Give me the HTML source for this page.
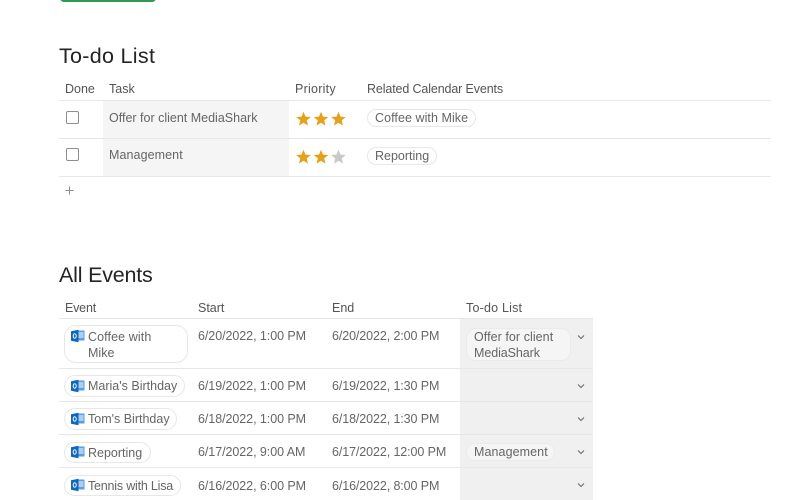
<!DOCTYPE html>
<html><head><meta charset="utf-8">
<style>
html,body{margin:0;padding:0;background:#fff}
body{width:800px;height:500px;position:relative;overflow:hidden;font-family:"Liberation Sans",sans-serif;font-size:12.5px;color:#666564}
.t{position:absolute;white-space:nowrap;line-height:16px}
.h{color:#555453}
.title{position:absolute;font-size:21.5px;color:#252423;line-height:28px;white-space:nowrap}
.l{position:absolute;height:1px;background:#e8e7e7}
.b{position:absolute;background:#f5f5f5}
.g{position:absolute;background:#f0f0f0}
.p{position:absolute;box-sizing:border-box;border:1px solid #e8e7e6;border-radius:10px;background:#fff}
.q{position:absolute;box-sizing:border-box;border:1px solid #ebeaea;border-radius:10px;background:#f5f5f5}
.cb{position:absolute;box-sizing:border-box;width:13px;height:13px;border:1.5px solid #8f8d8b;border-radius:2px;background:#fff}
svg{position:absolute;display:block}
</style></head>
<body>
<div style="position:absolute;left:60px;top:-8px;width:96px;height:10px;background:#2f9a4f;border-radius:4px"></div>

<div class="title" style="left:59px;top:42px;letter-spacing:.3px">To-do List</div>

<div class="t h" style="left:65px;top:81px">Done</div>
<div class="t h" style="left:109px;top:81px">Task</div>
<div class="t h" style="left:295px;top:81px;letter-spacing:.25px">Priority</div>
<div class="t h" style="left:367px;top:81px;letter-spacing:-.13px">Related Calendar Events</div>

<div class="b" style="left:103px;top:101px;width:186px;height:75px"></div>
<div class="l" style="left:59px;top:100px;width:712px"></div>
<div class="l" style="left:59px;top:138px;width:712px"></div>
<div class="l" style="left:59px;top:176px;width:712px"></div>

<div class="cb" style="left:66px;top:111px"></div>
<div class="cb" style="left:66px;top:148px"></div>
<div class="t" style="left:109px;top:110px">Offer for client MediaShark</div>
<div class="t" style="left:109px;top:147px;letter-spacing:.08px">Management</div>

<svg style="left:295px;top:111px" width="54" height="16" viewBox="0 0 54 16"><g fill="#e5a11c"><path d="M8.500 .8L10.500 5.600 15.800 6 11.700 9.400 13 14.600 8.500 11.800 4 14.600 5.300 9.400 1.200 6 6.500 5.600Z"/><path transform="translate(17.500 0)" d="M8.500 .8L10.500 5.600 15.800 6 11.700 9.400 13 14.600 8.500 11.800 4 14.600 5.300 9.400 1.200 6 6.500 5.600Z"/><path transform="translate(35 0)" d="M8.500 .8L10.500 5.600 15.800 6 11.700 9.400 13 14.600 8.500 11.800 4 14.600 5.300 9.400 1.200 6 6.500 5.600Z"/></g></svg>
<svg style="left:295px;top:149px" width="54" height="16" viewBox="0 0 54 16"><g fill="#e5a11c"><path d="M8.500 .8L10.500 5.600 15.800 6 11.700 9.400 13 14.600 8.500 11.800 4 14.600 5.300 9.400 1.200 6 6.500 5.600Z"/><path transform="translate(17.500 0)" d="M8.500 .8L10.500 5.600 15.800 6 11.700 9.400 13 14.600 8.500 11.800 4 14.600 5.300 9.400 1.200 6 6.500 5.600Z"/></g><path fill="#cbc9c8" transform="translate(35 0)" d="M8.500 .8L10.500 5.600 15.800 6 11.700 9.400 13 14.600 8.500 11.800 4 14.600 5.300 9.400 1.200 6 6.500 5.600Z"/></svg>

<div class="p" style="left:367px;top:109px;width:109px;height:18px"></div>
<div class="t" style="left:375px;top:110px;letter-spacing:.06px">Coffee with Mike</div>
<div class="p" style="left:367px;top:147px;width:70px;height:18px"></div>
<div class="t" style="left:375px;top:148px">Reporting</div>

<svg style="left:65px;top:186px" width="9" height="9" viewBox="0 0 9 9"><path d="M4.500 .5V8.500M.5 4.500H8.500" stroke="#8f8d8b" stroke-width="1"/></svg>

<div class="title" style="left:59px;top:261px;letter-spacing:-.2px">All Events</div>

<div class="t h" style="left:65px;top:300px;letter-spacing:-.2px">Event</div>
<div class="t h" style="left:198px;top:300px">Start</div>
<div class="t h" style="left:332px;top:300px">End</div>
<div class="t h" style="left:466px;top:300px;letter-spacing:.2px">To-do List</div>

<div class="g" style="left:460px;top:319px;width:133px;height:181px"></div>
<div class="l" style="left:59px;top:318px;width:534px"></div>
<div class="l" style="left:59px;top:368px;width:534px"></div>
<div class="l" style="left:59px;top:401px;width:534px"></div>
<div class="l" style="left:59px;top:434px;width:534px"></div>
<div class="l" style="left:59px;top:467px;width:534px"></div>

<div class="p" style="left:64px;top:325px;width:124px;height:38px;border-radius:12px"></div>
<div class="p" style="left:64px;top:375px;width:121px;height:22px;border-radius:11px"></div>
<div class="p" style="left:64px;top:408px;width:113px;height:22px;border-radius:11px"></div>
<div class="p" style="left:64px;top:442px;width:87px;height:21px;border-radius:11px"></div>
<div class="p" style="left:64px;top:475px;width:117px;height:21px;border-radius:11px"></div>

<svg style="left:71px;top:329px" width="14" height="14" viewBox="0 0 14 14"><rect x="5" y="1.500" width="8.500" height="10" fill="#5a9fe0"/><path d="M7.500 4H12.500M7.500 6H12.500M7.500 8H12.500" stroke="#fff" stroke-width=".9"/><path d="M0 2.200L7.500 .8V13.200L0 11.800Z" fill="#0f67c0"/><ellipse cx="3.700" cy="7" rx="1.500" ry="2.200" fill="none" stroke="#fff" stroke-width="1"/></svg>
<svg style="left:71px;top:379px" width="14" height="14" viewBox="0 0 14 14"><rect x="5" y="1.500" width="8.500" height="10" fill="#5a9fe0"/><path d="M7.500 4H12.500M7.500 6H12.500M7.500 8H12.500" stroke="#fff" stroke-width=".9"/><path d="M0 2.200L7.500 .8V13.200L0 11.800Z" fill="#0f67c0"/><ellipse cx="3.700" cy="7" rx="1.500" ry="2.200" fill="none" stroke="#fff" stroke-width="1"/></svg>
<svg style="left:71px;top:412px" width="14" height="14" viewBox="0 0 14 14"><rect x="5" y="1.500" width="8.500" height="10" fill="#5a9fe0"/><path d="M7.500 4H12.500M7.500 6H12.500M7.500 8H12.500" stroke="#fff" stroke-width=".9"/><path d="M0 2.200L7.500 .8V13.200L0 11.800Z" fill="#0f67c0"/><ellipse cx="3.700" cy="7" rx="1.500" ry="2.200" fill="none" stroke="#fff" stroke-width="1"/></svg>
<svg style="left:71px;top:445px" width="14" height="14" viewBox="0 0 14 14"><rect x="5" y="1.500" width="8.500" height="10" fill="#5a9fe0"/><path d="M7.500 4H12.500M7.500 6H12.500M7.500 8H12.500" stroke="#fff" stroke-width=".9"/><path d="M0 2.200L7.500 .8V13.200L0 11.800Z" fill="#0f67c0"/><ellipse cx="3.700" cy="7" rx="1.500" ry="2.200" fill="none" stroke="#fff" stroke-width="1"/></svg>
<svg style="left:71px;top:478px" width="14" height="14" viewBox="0 0 14 14"><rect x="5" y="1.500" width="8.500" height="10" fill="#5a9fe0"/><path d="M7.500 4H12.500M7.500 6H12.500M7.500 8H12.500" stroke="#fff" stroke-width=".9"/><path d="M0 2.200L7.500 .8V13.200L0 11.800Z" fill="#0f67c0"/><ellipse cx="3.700" cy="7" rx="1.500" ry="2.200" fill="none" stroke="#fff" stroke-width="1"/></svg>

<div class="t" style="left:88px;top:329px;letter-spacing:.1px">Coffee with</div>
<div class="t" style="left:88px;top:345px">Mike</div>
<div class="t" style="left:88px;top:378px">Maria's Birthday</div>
<div class="t" style="left:88px;top:411px">Tom's Birthday</div>
<div class="t" style="left:88px;top:445px">Reporting</div>
<div class="t" style="left:88px;top:478px;letter-spacing:-.2px">Tennis with Lisa</div>

<div class="t" style="left:198px;top:328px;letter-spacing:-.06px">6/20/2022, 1:00 PM</div>
<div class="t" style="left:198px;top:378px;letter-spacing:-.06px">6/19/2022, 1:00 PM</div>
<div class="t" style="left:198px;top:411px;letter-spacing:-.06px">6/18/2022, 1:00 PM</div>
<div class="t" style="left:198px;top:444px;letter-spacing:-.06px">6/17/2022, 9:00 AM</div>
<div class="t" style="left:198px;top:478px;letter-spacing:-.06px">6/16/2022, 6:00 PM</div>

<div class="t" style="left:332px;top:328px;letter-spacing:-.1px">6/20/2022, 2:00 PM</div>
<div class="t" style="left:332px;top:378px;letter-spacing:-.1px">6/19/2022, 1:30 PM</div>
<div class="t" style="left:332px;top:411px;letter-spacing:-.1px">6/18/2022, 1:30 PM</div>
<div class="t" style="left:332px;top:444px;letter-spacing:-.1px">6/17/2022, 12:00 PM</div>
<div class="t" style="left:332px;top:478px;letter-spacing:-.1px">6/16/2022, 8:00 PM</div>

<div class="q" style="left:466px;top:328px;width:105px;height:33px"></div>
<div class="t" style="left:474px;top:329px;letter-spacing:.06px">Offer for client</div>
<div class="t" style="left:474px;top:345px;letter-spacing:-.08px">MediaShark</div>
<div class="q" style="left:466px;top:443px;width:89px;height:18px"></div>
<div class="t" style="left:474px;top:444px;letter-spacing:.08px">Management</div>

<svg style="left:577px;top:334px" width="8" height="6" viewBox="0 0 8 6"><path d="M1 1.500L4 4.500 7 1.500" fill="none" stroke="#6b6a69" stroke-width="1.100"/></svg>
<svg style="left:577px;top:383px" width="8" height="6" viewBox="0 0 8 6"><path d="M1 1.500L4 4.500 7 1.500" fill="none" stroke="#6b6a69" stroke-width="1.100"/></svg>
<svg style="left:577px;top:416px" width="8" height="6" viewBox="0 0 8 6"><path d="M1 1.500L4 4.500 7 1.500" fill="none" stroke="#6b6a69" stroke-width="1.100"/></svg>
<svg style="left:577px;top:449px" width="8" height="6" viewBox="0 0 8 6"><path d="M1 1.500L4 4.500 7 1.500" fill="none" stroke="#6b6a69" stroke-width="1.100"/></svg>
<svg style="left:577px;top:482px" width="8" height="6" viewBox="0 0 8 6"><path d="M1 1.500L4 4.500 7 1.500" fill="none" stroke="#6b6a69" stroke-width="1.100"/></svg>
</body></html>
